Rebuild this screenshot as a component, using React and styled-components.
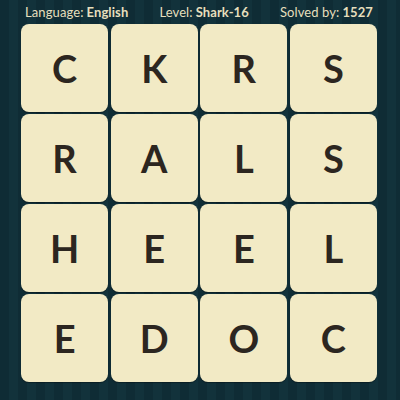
import styled, { createGlobalStyle } from "styled-components"

const GlobalStyle = createGlobalStyle`
	html, body {
		margin: 0;
		padding: 0;
		background: #0f2c35;
	}
`

const Page = styled.div`
	width: 400px;
	height: 400px;
	box-sizing: border-box;
	padding: 0 23px 0 21px;
	display: flex;
	flex-direction: column;
	background: repeating-linear-gradient(
		90deg,
		#0f2c35 0px,
		#0f2c35 9px,
		#12323b 9px,
		#12323b 18px
	);
	font-family: "Lato", "Open Sans", sans-serif;
`

const Header = styled.div`
	height: 24px;
	display: flex;
	align-items: center;
	justify-content: space-between;
	padding: 0 4px 0 4px;
	color: #e6dfbd;
	font-size: 13px;
	letter-spacing: 0.1px;
`

const Stat = styled.span`
	white-space: nowrap;
	& b {
		font-weight: 700;
		margin-left: 3px;
	}
`

const Board = styled.div`
	display: grid;
	grid-template-columns: repeat(4, 1fr);
	grid-auto-rows: 87.5px;
	gap: 2.5px;
`

const Tile = styled.div`
	background: #f2eac5;
	border-radius: 8px;
	box-shadow: 0 1px 1px rgba(0, 0, 0, 0.35);
	display: flex;
	align-items: center;
	justify-content: center;
	color: #2c2620;
	font-size: 38px;
	font-weight: 700;
	line-height: 1;
`

const letters = ["C", "K", "R", "S", "R", "A", "L", "S", "H", "E", "E", "L", "E", "D", "O", "C"]

export default function App() {
	return (
		<>
			<GlobalStyle />
			<Page>
				<Header>
					<Stat>Language:<b>English</b></Stat>
					<Stat>Level:<b>Shark-16</b></Stat>
					<Stat>Solved by:<b>1527</b></Stat>
				</Header>
				<Board>
					{letters.map((l, i) => (
						<Tile key={i}>{l}</Tile>
					))}
				</Board>
			</Page>
		</>
	)
}
